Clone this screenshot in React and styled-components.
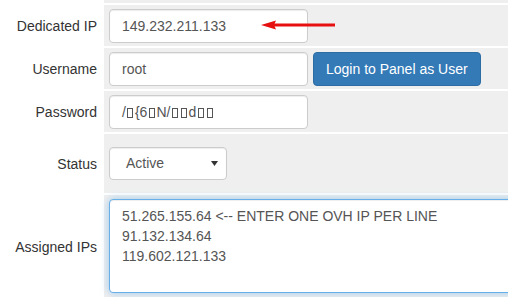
import React from "react";
import styled, { createGlobalStyle } from "styled-components";

const GlobalStyle = createGlobalStyle`
  html, body {
    margin: 0;
    padding: 0;
    background: #ffffff;
    overflow: hidden;
  }
  body {
    font-family: "Liberation Sans", Arial, sans-serif;
    font-size: 14px;
    color: #333333;
  }
`;

const Form = styled.div`
  display: grid;
  grid-template-columns: 104px 1fr;
  row-gap: 2px;
  width: 508px;
  height: 297px;
  overflow: hidden;
  background: #ffffff;
`;

const Label = styled.div`
  display: flex;
  align-items: center;
  justify-content: flex-end;
  padding-right: 7px;
  background: #ffffff;
  color: #333333;
  font-size: 14px;
  white-space: nowrap;
`;

const Field = styled.div`
  position: relative;
  display: flex;
  align-items: ${(p) => p.$align || "center"};
  gap: 5px;
  padding: ${(p) => p.$pad || "4px 5px 3px"};
  min-height: ${(p) => p.$minH || "auto"};
  background: #efefef;
  box-sizing: border-box;
`;

const Input = styled.div`
  box-sizing: border-box;
  width: 199px;
  height: 34px;
  padding: 6px 12px;
  border: 1px solid #cccccc;
  border-radius: 4px;
  background: #ffffff;
  box-shadow: inset 0 1px 1px rgba(0, 0, 0, 0.075);
  color: #555555;
  font-size: 14px;
  line-height: 20px;
  white-space: nowrap;
  flex-shrink: 0;
`;

const Tofu = styled.span`
  display: inline-block;
  width: 6px;
  height: 10px;
  margin: 0 1.5px;
  border: 1px solid #555555;
  box-sizing: border-box;
  vertical-align: -1px;
`;

const Button = styled.button`
  box-sizing: border-box;
  height: 34px;
  padding: 6px 12px;
  border: 1px solid #2e6da4;
  border-radius: 4px;
  background: #337ab7;
  color: #ffffff;
  font-family: "Liberation Sans", Arial, sans-serif;
  font-size: 14px;
  line-height: 20px;
  white-space: nowrap;
  cursor: pointer;
  flex-shrink: 0;
`;

const Select = styled.div`
  position: relative;
  box-sizing: border-box;
  width: 118px;
  height: 33px;
  padding: 6px 12px 6px 16px;
  border: 1px solid #cccccc;
  border-radius: 4px;
  background: #ffffff;
  box-shadow: inset 0 1px 1px rgba(0, 0, 0, 0.075);
  color: #555555;
  font-size: 14px;
  line-height: 19px;
`;

const Caret = styled.svg`
  position: absolute;
  right: 8px;
  top: 13px;
`;

const TextArea = styled.div`
  box-sizing: border-box;
  width: 440px;
  height: 94px;
  padding: 6px 12px;
  border: 1px solid #66afe9;
  border-radius: 4px;
  background: #ffffff;
  box-shadow: inset 0 1px 1px rgba(0, 0, 0, 0.075),
    0 0 8px rgba(102, 175, 233, 0.6);
  color: #555555;
  font-size: 14px;
  line-height: 20px;
  white-space: pre;
  flex-shrink: 0;
`;

const Arrow = styled.svg`
  position: absolute;
  left: 157px;
  top: 15px;
`;

export default function App() {
  return (
    <>
      <GlobalStyle />
      <Form>
        <Label />
        <Field $pad="0" $minH="3px" />

        <Label>Dedicated IP</Label>
        <Field>
          <Input>149.232.211.133</Input>
          <Arrow width="74" height="10" viewBox="0 0 74 10">
            <polygon points="0,5 15,0.5 13,5 15,9.5" fill="#e5100f" />
            <rect x="12" y="3.5" width="62" height="3" fill="#e5100f" />
          </Arrow>
        </Field>

        <Label>Username</Label>
        <Field>
          <Input>root</Input>
          <Button>Login to Panel as User</Button>
        </Field>

        <Label>Password</Label>
        <Field>
          <Input>
            /<Tofu />{"{"}6<Tofu />N/<Tofu /><Tofu />d<Tofu /><Tofu />
          </Input>
        </Field>

        <Label>Status</Label>
        <Field $pad="13px 5px 13px">
          <Select>
            Active
            <Caret width="7" height="5" viewBox="0 0 7 5">
              <polygon points="0,0 7,0 3.5,5" fill="#333333" />
            </Caret>
          </Select>
        </Field>

        <Label>Assigned IPs</Label>
        <Field $pad="4px 5px 6px">
          <TextArea>
            {"51.265.155.64 <-- ENTER ONE OVH IP PER LINE\n91.132.134.64\n119.602.121.133"}
          </TextArea>
        </Field>
      </Form>
    </>
  );
}
